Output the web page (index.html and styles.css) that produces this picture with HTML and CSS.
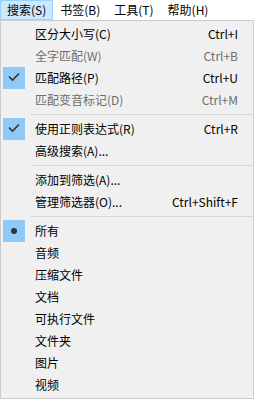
FILE: index.html
```html
<!DOCTYPE html>
<html lang="zh-CN">
<head>
    <meta charset="UTF-8">
    <meta name="viewport" content="width=device-width, initial-scale=1.0">
    <title>搜索菜单</title>
    <link rel="stylesheet" href="styles.css">
</head>
<body>
    <div class="menubar">
        <span class="top active">搜索(S)</span>
        <span class="top">书签(B)</span>
        <span class="top">工具(T)</span>
        <span class="top">帮助(H)</span>
    </div>
    <div class="dropdown">
        <div class="item"><span class="mark"></span><span class="label">区分大小写(C)</span><span class="key">Ctrl+I</span></div>
        <div class="item disabled"><span class="mark"></span><span class="label">全字匹配(W)</span><span class="key">Ctrl+B</span></div>
        <div class="item"><span class="mark on"><svg width="22" height="22" viewBox="0 0 22 22"><polyline points="6,9.5 9.5,13 16,6.5" fill="none" stroke="#333" stroke-width="1.6"/></svg></span><span class="label">匹配路径(P)</span><span class="key">Ctrl+U</span></div>
        <div class="item disabled"><span class="mark"></span><span class="label">匹配变音标记(D)</span><span class="key">Ctrl+M</span></div>
        <div class="sep"></div>
        <div class="item"><span class="mark on"><svg width="22" height="22" viewBox="0 0 22 22"><polyline points="6,9.5 9.5,13 16,6.5" fill="none" stroke="#333" stroke-width="1.6"/></svg></span><span class="label">使用正则表达式(R)</span><span class="key">Ctrl+R</span></div>
        <div class="item"><span class="mark"></span><span class="label">高级搜索(A)...</span></div>
        <div class="sep"></div>
        <div class="item"><span class="mark"></span><span class="label">添加到筛选(A)...</span></div>
        <div class="item"><span class="mark"></span><span class="label">管理筛选器(O)...</span><span class="key">Ctrl+Shift+F</span></div>
        <div class="sep"></div>
        <div class="item"><span class="mark on"><svg width="22" height="22" viewBox="0 0 22 22"><circle cx="11" cy="11" r="3" fill="#333"/></svg></span><span class="label">所有</span></div>
        <div class="item"><span class="mark"></span><span class="label">音频</span></div>
        <div class="item"><span class="mark"></span><span class="label">压缩文件</span></div>
        <div class="item"><span class="mark"></span><span class="label">文档</span></div>
        <div class="item"><span class="mark"></span><span class="label">可执行文件</span></div>
        <div class="item"><span class="mark"></span><span class="label">文件夹</span></div>
        <div class="item"><span class="mark"></span><span class="label">图片</span></div>
        <div class="item"><span class="mark"></span><span class="label">视频</span></div>
    </div>
</body>
</html>
```

FILE: styles.css
```css
body {
    margin: 0;
    padding: 0;
    background-color: #ffffff;
    font-family: 'Noto Sans CJK SC', 'Liberation Sans', sans-serif;
    font-size: 12px;
    color: #000000;
}

.menubar {
    display: flex;
    height: 20px;
    background-color: #ffffff;
}

.top {
    box-sizing: border-box;
    height: 20px;
    line-height: 18px;
    padding: 0 6px;
    border: 1px solid transparent;
}

.top.active {
    background-color: #cce8ff;
    border-color: #99d1ff;
}

.dropdown {
    box-sizing: border-box;
    height: 379px;
    background-color: #f0f0f0;
    border: 1px solid #cccccc;
    padding: 2px 0 1px;
}

.item {
    display: flex;
    align-items: center;
    height: 22px;
}

.mark {
    width: 22px;
    height: 22px;
    margin-left: 2px;
    flex-shrink: 0;
}

.mark svg {
    display: block;
}

.mark.on {
    background-color: #90c8f6;
}

.label {
    margin-left: 10px;
    line-height: 22px;
}

.key {
    margin-left: auto;
    padding-right: 15px;
    line-height: 22px;
}

.item.disabled {
    color: #6d6d6d;
}

.sep {
    height: 1px;
    margin: 3px 0 3px 30px;
    background-color: #d7d7d7;
}
```
